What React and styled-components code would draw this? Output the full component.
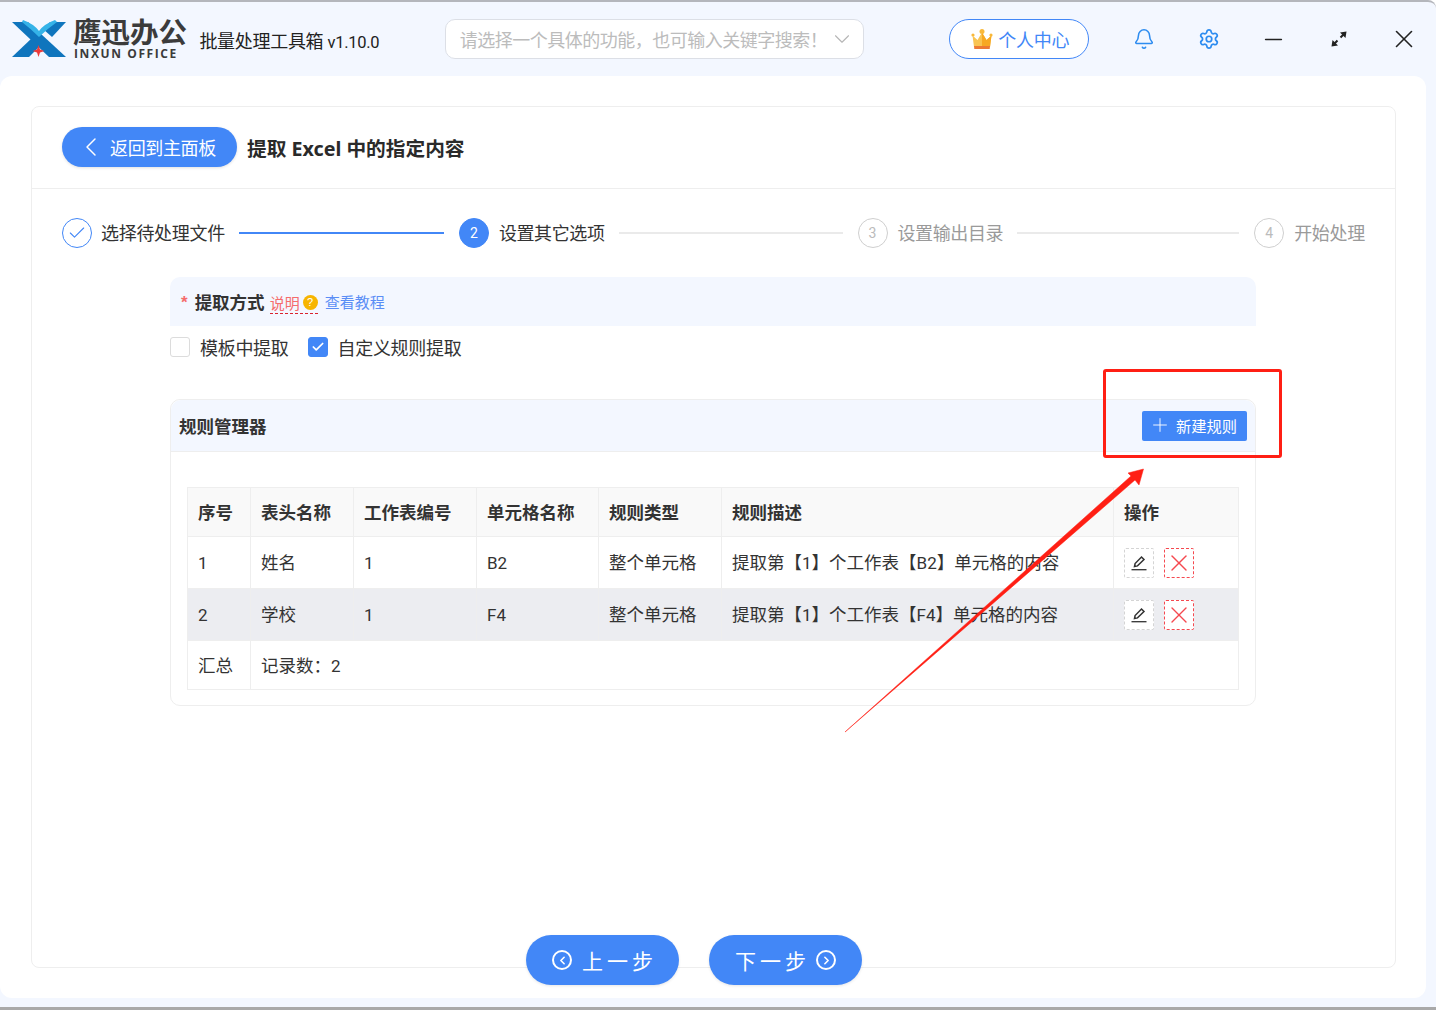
import React from 'react';
import styled, { createGlobalStyle } from 'styled-components';
import { Bell, Settings, ChevronLeft, ChevronRight, ChevronDown, Check, Plus, X, Minus } from 'lucide-react';

const GlobalStyle = createGlobalStyle`
  html, body { margin: 0; padding: 0; background: #fff; }
  body { font-family: "Noto Sans CJK SC", "Noto Sans", sans-serif; color: #333; }
  * { box-sizing: border-box; }
`;

const FONT_LATIN = '"Roboto", "Noto Sans CJK SC", sans-serif';

const Window = styled.div`
  position: relative;
  width: 1436px;
  height: 1010px;
  overflow: hidden;
  background: #f3f7ff;
  border-top: 2px solid #b4b6bc;
  border-bottom: 3px solid #a9a9a9;
  border-top-right-radius: 8px;
  display: flex;
  flex-direction: column;
`;

const TitleBar = styled.header`
  height: 74px;
  flex: none;
  display: flex;
  align-items: center;
  padding-left: 12px;
`;

const Brand = styled.div`
  display: flex;
  align-items: center;
  width: 188px;
  gap: 7px;
`;

const BrandText = styled.div`
  display: flex;
  flex-direction: column;
  margin-top: -1px;
`;

const BrandName = styled.div`
  font-size: 28.5px;
  line-height: 28px;
  font-weight: 700;
  color: #3b3b3b;
  white-space: nowrap;
`;

const BrandSub = styled.div`
  margin-top: 2px;
  font-family: "Open Sans", sans-serif;
  font-size: 12px;
  line-height: 13px;
  font-weight: 700;
  letter-spacing: 1.6px;
  padding-left: 1px;
  color: #3b3b3b;
  white-space: nowrap;
`;

const AppName = styled.div`
  width: 245px;
  margin-top: 2px;
  font-size: 18px;
  letter-spacing: -0.3px;
  color: #222;
  white-space: nowrap;
  font-family: ${FONT_LATIN};
`;

const Version = styled.span`
  font-size: 16.5px;
`;

const SearchBox = styled.div`
  width: 421px;
  height: 40px;
  margin-left: 1px;
  border: 1px solid #dcdfe6;
  border-radius: 10px;
  background: #fff;
  display: flex;
  align-items: center;
  justify-content: space-between;
  padding: 0 8px 0 14px;
  font-size: 18px;
  letter-spacing: -0.5px;
  color: #bcbcbc;
  white-space: nowrap;
`;

const UserButton = styled.button`
  width: 140px;
  height: 40px;
  margin-left: 85px;
  border: 1px solid #4287f7;
  border-radius: 20px;
  background: #fff;
  color: #4287f7;
  font: inherit;
  font-size: 18px;
  letter-spacing: -0.3px;
  display: flex;
  align-items: center;
  justify-content: center;
  gap: 5px;
  padding: 0 0 0 2px;
`;

const IconSlot = styled.div`
  width: 65px;
  height: 40px;
  margin-left: ${p => p.$first ? '23px' : '0'};
  display: flex;
  align-items: center;
  justify-content: center;
  color: ${p => p.$tone || '#222'};
`;

const MainPanel = styled.main`
  width: 1426px;
  height: 922px;
  flex: none;
  background: #fff;
  border-radius: 12px;
  padding: 30px 30px 30px 31px;
`;

const Card = styled.section`
  height: 862px;
  border: 1px solid #eeeeee;
  border-radius: 8px;
  display: flex;
  flex-direction: column;
`;

const CardHead = styled.div`
  height: 82px;
  flex: none;
  border-bottom: 1px solid #eeeeee;
  display: flex;
  align-items: center;
  padding: 0 30px 2px;
`;

const BackButton = styled.button`
  width: 175px;
  height: 40px;
  border: 0;
  border-radius: 20px;
  background: #4287f7;
  color: #fff;
  font: inherit;
  font-size: 18px;
  letter-spacing: -0.35px;
  display: flex;
  align-items: center;
  padding: 1px 0 0 13px;
  gap: 3px;
  box-shadow: 0 1px 3px rgba(0,0,0,.12);
`;

const PageTitle = styled.h1`
  margin: 2px 0 0 10px;
  font-size: 19.7px;
  font-weight: 700;
  color: #2a2a2a;
  font-family: "Noto Sans", "Noto Sans CJK SC", sans-serif;
  white-space: nowrap;
`;

const Steps = styled.ol`
  list-style: none;
  margin: 0;
  padding: 28px 30px 0;
  height: 88px;
  flex: none;
  display: flex;
  align-items: flex-start;
`;

const Step = styled.li`
  height: 32px;
  display: flex;
  align-items: center;
  flex: none;
`;

const StepDot = styled.span`
  width: 30px;
  height: 30px;
  border-radius: 50%;
  display: flex;
  align-items: center;
  justify-content: center;
  font-family: ${FONT_LATIN};
  font-size: 14px;
  color: ${p => p.$state === 'active' ? '#fff' : p.$state === 'done' ? '#4287f7' : '#bbb'};
  background: ${p => p.$state === 'active' ? '#4287f7' : '#fff'};
  border: 1px solid ${p => p.$state === 'todo' ? '#cfcfcf' : '#4287f7'};
`;

const StepLabel = styled.span`
  margin-left: ${p => p.$gap}px;
  margin-bottom: 2px;
  font-size: 18px;
  letter-spacing: ${p => p.$tight ? '-0.4px' : '-0.3px'};
  color: ${p => p.$muted ? '#9a9a9a' : '#333'};
  white-space: nowrap;
`;

const StepLine = styled.span`
  flex: none;
  width: ${p => p.$w}px;
  height: 2px;
  margin: 15px 15px 0 14px;
  background: ${p => p.$on ? '#4287f7' : '#eaeaea'};
`;

const Body = styled.div`
  width: 1086px;
  margin-left: 138px;
  flex: 1;
  min-height: 0;
`;

const OptionHead = styled.div`
  height: 49px;
  background: #f3f7ff;
  border-radius: 10px 10px 0 0;
  display: flex;
  align-items: center;
  padding-left: 11px;
  white-space: nowrap;
`;

const Required = styled.span`
  color: #f56c6c;
  font-size: 17px;
  font-weight: 700;
  margin-right: 7px;
  margin-top: 2px;
  font-family: "Liberation Sans", sans-serif;
`;

const OptionTitle = styled.span`
  font-size: 17.5px;
  font-weight: 700;
  color: #333;
`;

const HelpLink = styled.span`
  margin-left: 5px;
  display: flex;
  align-items: center;
  gap: 3px;
  height: 22px;
  margin-top: 3px;
  color: #f56c6c;
  font-size: 15px;
  border-bottom: 1px dashed #d9232e;
`;

const HelpDot = styled.span`
  width: 15px;
  height: 15px;
  border-radius: 50%;
  background: #f7b500;
  color: #fff;
  font-size: 11px;
  line-height: 15px;
  text-align: center;
  font-family: "Liberation Sans", sans-serif;
`;

const TutorialLink = styled.span`
  margin-left: 7px;
  color: #5a8ef6;
  font-size: 15px;
`;

const OptionRow = styled.div`
  height: 44px;
  padding-bottom: 2px;
  display: flex;
  align-items: center;
`;

const CheckItem = styled.label`
  display: flex;
  align-items: center;
  margin-right: 19px;
  font-size: 18px;
  letter-spacing: -0.3px;
  color: #333;
`;

const CheckBox = styled.span`
  width: 20px;
  height: 20px;
  margin-right: 10px;
  border-radius: 3px;
  border: 1px solid ${p => p.$on ? '#4287f7' : '#dcdcdc'};
  background: ${p => p.$on ? '#4287f7' : '#fff'};
  color: #fff;
  display: flex;
  align-items: center;
  justify-content: center;
`;

const RulePanel = styled.div`
  margin-top: 29px;
  height: 307px;
  border: 1px solid #eeeeee;
  border-radius: 10px;
`;

const RuleHead = styled.div`
  height: 52px;
  background: #f3f7ff;
  border-bottom: 1px solid #eeeeee;
  border-radius: 10px 10px 0 0;
  display: flex;
  align-items: center;
  justify-content: space-between;
  padding: 0 8px;
`;

const RuleTitle = styled.span`
  font-size: 17.5px;
  font-weight: 700;
  color: #333;
`;

const NewRuleButton = styled.button`
  width: 105px;
  height: 30px;
  border: 0;
  border-radius: 2px;
  background: #4287f7;
  color: #fff;
  font: inherit;
  font-size: 15.25px;
  display: flex;
  align-items: center;
  padding: 0 0 2px 7px;
  gap: 5px;
`;

const RuleTable = styled.table`
  table-layout: fixed;
  width: 1051px;
  margin: 35px 0 0 16px;
  border-collapse: collapse;
  border: 1px solid #eeeeee;
  font-size: 17.5px;
  color: #333;
  th, td {
    padding: 0 10px 2px;
    border: 1px solid #eeeeee;
    text-align: left;
    white-space: nowrap;
  }
  th { height: 49px; background: #f9f9f9; font-weight: 700; color: #333; }
`;

const Row = styled.tr`
  height: ${p => p.$h}px;
  background: ${p => p.$stripe ? '#ecedf1' : '#fff'};
`;

const Latin = styled.span`
  font-family: ${FONT_LATIN};
  font-size: 17px;
`;

const Actions = styled.div`
  display: flex;
  gap: 10px;
  margin-top: 2px;
`;

const ActionButton = styled.span`
  width: 30px;
  height: 30px;
  background: #fff;
  border: 1px dashed ${p => p.$danger ? '#f5484f' : '#d4d4d4'};
  border-radius: 2px;
  color: ${p => p.$danger ? '#f5484f' : '#333'};
  display: flex;
  align-items: center;
  justify-content: center;
`;

const Footer = styled.div`
  flex: none;
  height: 50px;
  margin-bottom: -18px;
  padding-left: 494px;
  display: flex;
  gap: 30px;
`;

const StepButton = styled.button`
  width: 153px;
  height: 50px;
  border: 0;
  border-radius: 25px;
  background: #4287f7;
  color: #fff;
  font: inherit;
  font-size: 21px;
  letter-spacing: 4px;
  display: flex;
  align-items: center;
  justify-content: center;
  gap: ${p => p.$next ? '6px' : '10px'};
  padding: ${p => p.$next ? '0' : '0 0 0 4px'};
  box-shadow: 0 1px 3px rgba(0,0,0,.1);
`;

const RoundIcon = styled.span`
  width: 20px;
  height: 20px;
  border-radius: 50%;
  border: 2px solid #fff;
  display: flex;
  align-items: center;
  justify-content: center;
`;

const Callout = styled.div`
  position: absolute;
  left: 1103px;
  top: 367px;
  width: 179px;
  height: 89px;
  border: 3.5px solid #ff1f14;
  border-radius: 3px;
  pointer-events: none;
`;

const Arrow = styled.svg`
  position: absolute;
  left: 840px;
  top: 458px;
  pointer-events: none;
`;

const LogoMark = () => (
  <svg width="54" height="38" viewBox="0 0 54 38">
    <path d="M0 2h16l38 35H37z" fill="#0f75bd" />
    <path d="M0 37l20-19 8 8-11 11z" fill="#0f75bd" />
    <path d="M54 2H38l-7 7 9 8z" fill="#0f75bd" />
    <path d="M11 0Q22 4 27 11 32 4 43 0l2 2Q35 9 27 17 19 9 10 2z" fill="#35b3e8" />
    <path d="M26.500 25l1.500 4.500 4.500 1.500-4.500 1.500-1.500 4.500-1.500-4.500-4.500-1.500 4.500-1.500z" fill="#ee3b3b" />
  </svg>
);

const Crown = () => (
  <svg width="22" height="22" viewBox="0 0 22 22">
    <circle cx="11" cy="3.500" r="2.500" fill="#f9b93a" />
    <circle cx="2" cy="7" r="1.600" fill="#f9b93a" />
    <circle cx="20" cy="7" r="1.600" fill="#f9b93a" />
    <path d="M1.500 7.500L6.500 12 11 4.500 15.500 12l5-4.500L19 19H3z" fill="#f9c452" />
    <path d="M11 4.500L15.500 12l5-4.500L19 19h-8z" fill="#f7a823" />
    <path d="M3 18h16l-.3 3H3.300z" fill="#ec7a34" />
  </svg>
);

const ExpandIcon = () => (
  <svg width="18" height="18" viewBox="0 0 18 18" fill="#222" stroke="none">
    <path d="M16.500 1.500L10 2.500l5.500 5.500z" />
    <path d="M1.500 16.500L8 15.500 2.500 10z" />
    <path d="M13.500 4.500l-3 3M4.500 13.500l3-3" stroke="#222" strokeWidth="2" />
  </svg>
);

const EditIcon = () => (
  <svg width="16" height="16" viewBox="0 0 16 16" fill="none" stroke="#333" strokeWidth="1.500">
    <path d="M3.500 11.500l.6-3L10.500 2l2.500 2.500-6.500 6.400z" />
    <path d="M.5 14.700h15" strokeWidth="1.300" />
  </svg>
);

const rows = [
  { no: '1', head: '姓名', sheet: '1', cell: 'B2', type: '整个单元格', h: 52 },
  { no: '2', head: '学校', sheet: '1', cell: 'F4', type: '整个单元格', h: 52, stripe: true },
];

const App = () => (
  <Window>
    <GlobalStyle />
    <TitleBar>
      <Brand>
        <LogoMark />
        <BrandText>
          <BrandName>鹰迅办公</BrandName>
          <BrandSub>INXUN OFFICE</BrandSub>
        </BrandText>
      </Brand>
      <AppName>批量处理工具箱 <Version>v1.10.0</Version></AppName>
      <SearchBox>
        请选择一个具体的功能，也可输入关键字搜索！
        <ChevronDown size={26} strokeWidth={1} color="#b5b5b5" />
      </SearchBox>
      <UserButton><Crown />个人中心</UserButton>
      <IconSlot $first $tone="#2d8cf0"><Bell size={22} strokeWidth={1.7} /></IconSlot>
      <IconSlot $tone="#2d8cf0"><Settings size={22} strokeWidth={1.9} /></IconSlot>
      <IconSlot><Minus size={27} strokeWidth={1.4} /></IconSlot>
      <IconSlot><ExpandIcon /></IconSlot>
      <IconSlot><X size={30} strokeWidth={1.3} /></IconSlot>
    </TitleBar>
    <MainPanel>
      <Card>
        <CardHead>
          <BackButton><ChevronLeft size={32} strokeWidth={1.1} />返回到主面板</BackButton>
          <PageTitle>提取 Excel 中的指定内容</PageTitle>
        </CardHead>
        <Steps>
          <Step>
            <StepDot $state="done"><Check size={20} strokeWidth={1.3} /></StepDot>
            <StepLabel $gap={9}>选择待处理文件</StepLabel>
          </Step>
          <StepLine $on $w={205} />
          <Step>
            <StepDot $state="active">2</StepDot>
            <StepLabel $gap={10} $tight>设置其它选项</StepLabel>
          </Step>
          <StepLine $w={224} />
          <Step>
            <StepDot $state="todo">3</StepDot>
            <StepLabel $gap={10} $tight $muted>设置输出目录</StepLabel>
          </Step>
          <StepLine $w={222} />
          <Step>
            <StepDot $state="todo">4</StepDot>
            <StepLabel $gap={10} $muted>开始处理</StepLabel>
          </Step>
        </Steps>
        <Body>
          <OptionHead>
            <Required>*</Required>
            <OptionTitle>提取方式</OptionTitle>
            <HelpLink>说明<HelpDot>?</HelpDot></HelpLink>
            <TutorialLink>查看教程</TutorialLink>
          </OptionHead>
          <OptionRow>
            <CheckItem><CheckBox />模板中提取</CheckItem>
            <CheckItem><CheckBox $on><Check size={14} strokeWidth={3} /></CheckBox>自定义规则提取</CheckItem>
          </OptionRow>
          <RulePanel>
            <RuleHead>
              <RuleTitle>规则管理器</RuleTitle>
              <NewRuleButton><Plus size={22} strokeWidth={1} />新建规则</NewRuleButton>
            </RuleHead>
            <RuleTable>
              <colgroup>
                <col width="63" />
                <col width="103" />
                <col width="123" />
                <col width="122" />
                <col width="123" />
                <col width="392" />
                <col width="125" />
              </colgroup>
              <thead>
                <tr>
                  <th>序号</th><th>表头名称</th><th>工作表编号</th><th>单元格名称</th><th>规则类型</th><th>规则描述</th><th>操作</th>
                </tr>
              </thead>
              <tbody>
                {rows.map(r => (
                  <Row key={r.no} $h={r.h} $stripe={r.stripe}>
                    <td><Latin>{r.no}</Latin></td>
                    <td>{r.head}</td>
                    <td><Latin>{r.sheet}</Latin></td>
                    <td><Latin>{r.cell}</Latin></td>
                    <td>{r.type}</td>
                    <td>提取第【<Latin>1</Latin>】个工作表【<Latin>{r.cell}</Latin>】单元格的内容</td>
                    <td>
                      <Actions>
                        <ActionButton><EditIcon /></ActionButton>
                        <ActionButton $danger><X size={28} strokeWidth={1.2} /></ActionButton>
                      </Actions>
                    </td>
                  </Row>
                ))}
                <Row $h={49}>
                  <td>汇总</td>
                  <td colSpan={6}>记录数：<Latin>2</Latin></td>
                </Row>
              </tbody>
            </RuleTable>
          </RulePanel>
        </Body>
        <Footer>
          <StepButton><RoundIcon><ChevronLeft size={13} strokeWidth={3} /></RoundIcon>上一步</StepButton>
          <StepButton $next>下一步<RoundIcon><ChevronRight size={13} strokeWidth={3} /></RoundIcon></StepButton>
        </Footer>
      </Card>
    </MainPanel>
    <Callout />
    <Arrow width="310" height="280" viewBox="0 0 310 280">
      <path d="M5 272L291 16 288 13 303.500 9 299 25 295 20z" fill="#ff1f14" stroke="#ff1f14" strokeWidth=".5" strokeLinejoin="round" />
    </Arrow>
  </Window>
);

export default App;
